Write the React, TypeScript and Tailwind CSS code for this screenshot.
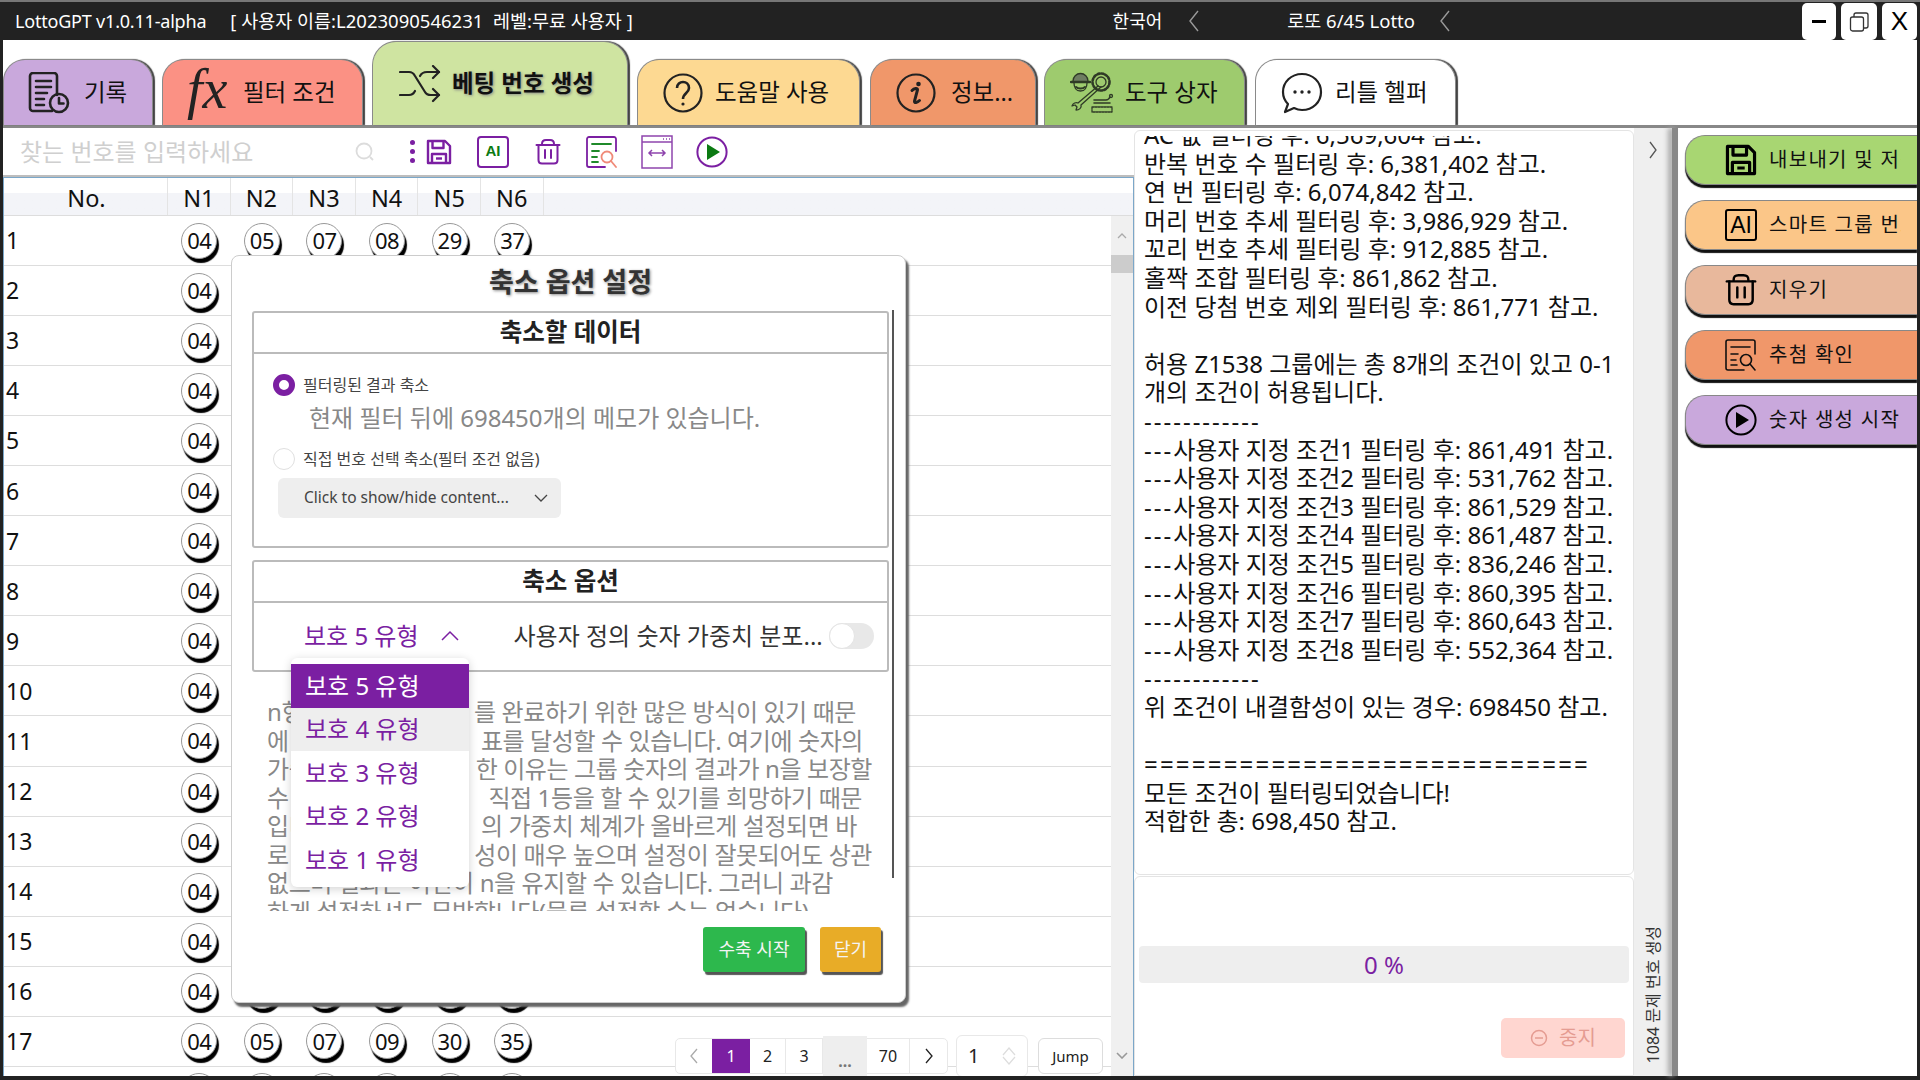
import React from "react";

const FONT = "font-['Noto_Sans','Noto_Sans_CJK_KR',sans-serif]";

const Chevron = ({ cls = "", d = "M10 2 L2 12 L10 22", w = 12, h = 24, color = "#9a9a9a", sw = 1.4 }: any) => (
  <svg width={w} height={h} viewBox={`0 0 ${w} ${h}`} className={cls} fill="none" stroke={color} strokeWidth={sw}>
    <path d={d} />
  </svg>
);

const HistoryIcon = () => (
  <svg width="42" height="42" viewBox="0 0 42 42" fill="none" stroke="#222" strokeWidth="2.6" strokeLinecap="round" strokeLinejoin="round">
    <path d="M24 39H5a3 3 0 0 1-3-3V4a3 3 0 0 1 3-3h21a3 3 0 0 1 3 3v19" />
    <path d="M8 9h15M8 15h15M8 21h11M8 27h8M8 33h8" />
    <circle cx="31" cy="31" r="9" />
    <path d="M31 26v5.5h4.5" />
  </svg>
);
const ShuffleIcon = () => (
  <svg width="42" height="38" viewBox="0 0 42 38" fill="none" stroke="#222" strokeWidth="2.2" strokeLinecap="round" strokeLinejoin="round">
    <path d="M1 7h9c3 0 5 2 6 4l10 16c1 2 3 3 6 3h8" />
    <path d="M1 30h9c3 0 5-2 6-4M21 11c1-2 4-4 7-4h12" />
    <path d="M34 1l6 6-6 6M34 24l6 6-6 6" />
  </svg>
);
const HelpIcon = () => (
  <svg width="40" height="40" viewBox="0 0 40 40" fill="none" stroke="#222" strokeWidth="2.2">
    <circle cx="20" cy="20" r="18.5" />
    <path d="M14 15c0-4 3-6 6-6s6 2 6 6c0 5-6 5-6 11" strokeWidth="2.6" />
    <circle cx="20" cy="31" r="1.6" fill="#222" stroke="none" />
  </svg>
);
const InfoIcon = () => (
  <svg width="40" height="40" viewBox="0 0 40 40" fill="none" stroke="#222" strokeWidth="2.2">
    <circle cx="20" cy="20" r="18.5" />
    <path d="M16 17.5c2-2 6-3 5.5-0.5L18.5 28c-.5 2.5 3 1.5 5-.5" strokeWidth="3" strokeLinecap="round" />
    <circle cx="22.5" cy="11" r="2.3" fill="#222" stroke="none" />
  </svg>
);
const ToolsIcon = () => (
  <svg width="44" height="42" viewBox="0 0 44 42" fill="none" stroke="#2f3a26" strokeWidth="1.3" strokeLinecap="round" strokeLinejoin="round">
    <path d="M3 9a7.500 7.500 0 0 1 15 0" fill="#6f7d62" />
    <path d="M1 10h19" strokeWidth="2.4" />
    <path d="M4 11c0 4 2 8 6.500 8s6.500-4 6.500-8" />
    <path d="M6 15c2 2 7 2 9 0" strokeWidth="2" />
    <circle cx="31" cy="10" r="8.500" strokeWidth="2.6" strokeDasharray="2.200 1.800" />
    <circle cx="31" cy="10" r="5" />
    <path d="M28 14L8 31c-2-1-5 0-6 3l3-1 2 2-1 3c3 0 6-2 5-5L31 15" />
    <path d="M24 28h12c2 0 3-1 4-3M24 31h16" strokeWidth="1.600" />
    <circle cx="41" cy="24" r="1.500" />
    <rect x="22" y="35" width="20" height="5" strokeDasharray="2 1" />
  </svg>
);
const ChatIcon = () => (
  <svg width="42" height="42" viewBox="0 0 42 42" fill="none" stroke="#222" strokeWidth="2.2" strokeLinejoin="round">
    <path d="M21 2c11 0 19 8 19 18s-8 18-19 18c-3 0-6-1-8-2l-9 4 3-8c-3-3-5-7-5-12C2 10 10 2 21 2z" />
    <circle cx="14" cy="20" r="1.7" fill="#222" stroke="none" />
    <circle cx="21" cy="20" r="1.7" fill="#222" stroke="none" />
    <circle cx="28" cy="20" r="1.7" fill="#222" stroke="none" />
  </svg>
);
const SaveIcon = ({ c = "#7b1fa2", s = 26, sw = 2.4 }: any) => (
  <svg width={s} height={s} viewBox="0 0 26 26" fill="none" stroke={c} strokeWidth={sw} strokeLinejoin="round">
    <path d="M2 2h17l5 5v17H2z" />
    <path d="M6.5 2v7h11V2" />
    <path d="M6 24v-9h14v9" />
    <path d="M10 19.5h6" />
  </svg>
);
const TrashIcon = ({ c = "#7b1fa2", s = 26, sw = 2 }: any) => (
  <svg width={s} height={s} viewBox="0 0 26 26" fill="none" stroke={c} strokeWidth={sw} strokeLinecap="round" strokeLinejoin="round">
    <path d="M1.5 6h23" />
    <path d="M7 5c0-3 1-4 4-4h4c3 0 4 1 4 4" />
    <path d="M3.5 6v15c0 2 1 3.5 3.5 3.5h12c2.500 0 3.500-1.500 3.500-3.500V6" />
    <path d="M10 11v8M16 11v8" />
  </svg>
);
const DocSearch = ({ border = "#7b1fa2", line = "#1f8a2a", glass = "#f08a78", s = 32, sw = 1.8 }: any) => (
  <svg width={s} height={s} viewBox="0 0 32 32" fill="none" strokeWidth={sw} strokeLinecap="round" strokeLinejoin="round">
    <path d="M30 15V3a2 2 0 0 0-2-2H3a2 2 0 0 0-2 2v26a2 2 0 0 0 2 2h16" stroke={border} />
    <path d="M6 8h19M6 15h7M6 21h5M6 26h6" stroke={line} />
    <circle cx="21" cy="21" r="5.500" stroke={glass} />
    <path d="M25 25l5 6" stroke={glass} />
  </svg>
);
const WidthIcon = () => (
  <svg width="32" height="34" viewBox="0 0 32 34" fill="none" stroke="#8e44ad" strokeWidth="1.5">
    <rect x="1" y="1" width="30" height="32" />
    <path d="M1 7h30" />
    <path d="M8 18h16M11 15l-3 3 3 3M21 15l3 3-3 3" />
    <path d="M22 4h1M25 4h1M28 4h1" />
  </svg>
);
const PlayIcon = ({ c = "#7b1fa2", f = "#0b7a12", s = 32, sw = 2 }: any) => (
  <svg width={s} height={s} viewBox="0 0 32 32">
    <circle cx="16" cy="16" r="14.600" fill="none" stroke={c} strokeWidth={sw} />
    <path d="M11 8l13 8-13 8z" fill={f} />
  </svg>
);
const SearchGlass = () => (
  <svg width="22" height="22" viewBox="0 0 22 22" fill="none" stroke="#dcdcdc" strokeWidth="1.8">
    <circle cx="10" cy="10" r="7.500" />
    <path d="M16 16l3 3" />
  </svg>
);

const Tab = ({ w, bg, pl, gap, ml, icon, label }: any) => (
  <div className={`${w} ${bg} ${pl} ${gap} ${ml} h-[66px] flex items-center rounded-t-[22px] border border-b-0 border-[#8a8a8a] shadow-[2px_0_1px_#444] shrink-0`}>
    {icon}
    <span className="text-[23.5px] text-[#111] whitespace-nowrap">{label}</span>
  </div>
);

const Ball = ({ n }: { n: string }) => (
  <div className="w-[36px] h-[36px] rounded-full bg-white border border-[#999] shadow-[2px_4px_1px_#000] flex items-center justify-center text-[22px] tracking-[-0.5px] text-[#111] mx-auto">
    {n}
  </div>
);

const ROWS: string[][] = [
  ["04", "05", "07", "08", "29", "37"],
  ["04", "05", "07", "08", "29", "38"],
  ["04", "05", "07", "08", "30", "31"],
  ["04", "05", "07", "08", "30", "32"],
  ["04", "05", "07", "08", "30", "34"],
  ["04", "05", "07", "08", "30", "35"],
  ["04", "05", "07", "08", "30", "37"],
  ["04", "05", "07", "09", "26", "31"],
  ["04", "05", "07", "09", "26", "34"],
  ["04", "05", "07", "09", "26", "35"],
  ["04", "05", "07", "09", "27", "31"],
  ["04", "05", "07", "09", "27", "34"],
  ["04", "05", "07", "09", "27", "35"],
  ["04", "05", "07", "09", "29", "31"],
  ["04", "05", "07", "09", "29", "34"],
  ["04", "05", "07", "09", "29", "35"],
  ["04", "05", "07", "09", "30", "35"],
  ["04", "05", "07", "09", "30", "37"],
];

const LOG: string[] = [
  "AC 값 필터링 후: 6,569,604 참고.",
  "반복 번호 수 필터링 후: 6,381,402 참고.",
  "연 번 필터링 후: 6,074,842 참고.",
  "머리 번호 추세 필터링 후: 3,986,929 참고.",
  "꼬리 번호 추세 필터링 후: 912,885 참고.",
  "홀짝 조합 필터링 후: 861,862 참고.",
  "이전 당첨 번호 제외 필터링 후: 861,771 참고.",
  " ",
  "허용 Z1538 그룹에는 총 8개의 조건이 있고 0-1",
  "개의 조건이 허용됩니다.",
  "------------",
  "---사용자 지정 조건1 필터링 후: 861,491 참고.",
  "---사용자 지정 조건2 필터링 후: 531,762 참고.",
  "---사용자 지정 조건3 필터링 후: 861,529 참고.",
  "---사용자 지정 조건4 필터링 후: 861,487 참고.",
  "---사용자 지정 조건5 필터링 후: 836,246 참고.",
  "---사용자 지정 조건6 필터링 후: 860,395 참고.",
  "---사용자 지정 조건7 필터링 후: 860,643 참고.",
  "---사용자 지정 조건8 필터링 후: 552,364 참고.",
  "------------",
  "위 조건이 내결함성이 있는 경우: 698450 참고.",
  " ",
  "============================",
  "모든 조건이 필터링되었습니다!",
  "적합한 총: 698,450 참고.",
];

const PARA = [
  { w: "w-[589px]", a: "n형 보호", b: "를 완료하기 위한 많은 방식이 있기 때문" },
  { w: "w-[596px]", a: "에 다양한", b: "표를 달성할 수 있습니다. 여기에 숫자의" },
  { w: "w-[605px]", a: "가중치", b: "한 이유는 그룹 숫자의 결과가 n을 보장할" },
  { w: "w-[595px]", a: "수 있도", b: "직접 1등을 할 수 있기를 희망하기 때문" },
  { w: "w-[590px]", a: "입니다", b: "의 가중치 체계가 올바르게 설정되면 바" },
  { w: "w-[605px]", a: "로 당첨", b: "성이 매우 높으며 설정이 잘못되어도 상관" },
  { w: "w-[588px]", a: "", b: "없으며 결과는 여전히 n을 유지할 수 있습니다. 그러니 과감" },
  { w: "w-[572px]", a: "", b: "하게 설정하셔도 무방합니다(물론 설정할 수는 없습니다)" },
];

const SIDE = [
  { bg: "bg-[#a8d672]", icon: <SaveIcon c="#000" s={32} sw={2.6} />, label: "내보내기 및 저장" },
  {
    bg: "bg-[#fbc688]",
    icon: (
      <span className="w-[32px] h-[32px] border-2 border-black rounded-[3px] flex items-center justify-center font-['Liberation_Sans',sans-serif] text-[23px] leading-none text-black">AI</span>
    ),
    label: "스마트 그룹 번호",
  },
  { bg: "bg-[#e8b89c]", icon: <TrashIcon c="#000" s={32} sw={2} />, label: "지우기" },
  { bg: "bg-[#f0976a]", icon: <DocSearch border="#111" line="#111" glass="#111" s={32} sw={1.6} />, label: "추첨 확인" },
  { bg: "bg-[#c9a8dc]", icon: <PlayIcon c="#000" f="#000" s={32} />, label: "숫자 생성 시작" },
];

const PageCell = ({ cls = "", children }: any) => (
  <div className={`h-full flex items-center justify-center text-[16px] text-[#222] border-r border-[#e8e8e8] ${cls}`}>{children}</div>
);

const LogLine = ({ text }: { text: string }) => {
  const m = text.match(/^([-=]+)(.*)$/);
  if (!m) return <div className="h-[28.6px]">{text}</div>;
  return (
    <div className="h-[28.6px]">
      <span className={text[0] === "=" ? "tracking-[2.2px]" : "tracking-[2px]"}>{m[1]}</span>
      {m[2]}
    </div>
  );
};

export default function App() {
  return (
    <div className={`relative w-[1920px] h-[1080px] overflow-hidden bg-[#222] ${FONT} pl-[3px] pr-[3px] pb-[4px] border-t-2 border-[#777]`}>
      {/* title bar */}
      <div className="h-[38px] -ml-[3px] -mr-[3px] flex items-center text-white text-[18px] relative">
        <span className="ml-[15px] tracking-[-0.2px]">LottoGPT v1.0.11-alpha</span>
        <span className="ml-[24px] text-[18.5px] whitespace-pre">[ 사용자 이름:L2023090546231  레벨:무료 사용자 ]</span>
        <span className="ml-auto">한국어</span>
        <Chevron cls="ml-[26px]" />
        <span className="ml-[87px] text-[18.5px]">로또 6/45 Lotto</span>
        <Chevron cls="ml-[24px] mr-[469px]" />
        <div className="absolute right-[3px] top-[1px] flex gap-[5px]">
          <div className="w-[34px] h-[37px] bg-white rounded-[5px] flex items-center justify-center text-black">
            <div className="w-[14px] h-[3px] bg-black" />
          </div>
          <div className="w-[36px] h-[37px] bg-white rounded-[5px] flex items-center justify-center">
            <svg width="20" height="20" viewBox="0 0 20 20" fill="none" stroke="#333" strokeWidth="1.300">
              <rect x="1.500" y="5" width="13" height="14" rx="2" />
              <path d="M5 5V3a2 2 0 0 1 2-2h10a2 2 0 0 1 2 2v11a2 2 0 0 1-2 2h-2" />
            </svg>
          </div>
          <div className="w-[35px] h-[37px] bg-white rounded-[5px] flex items-center justify-center text-black text-[26px] font-['Liberation_Sans',sans-serif]">X</div>
        </div>
      </div>

      {/* tabs */}
      <div className="h-[85px] bg-white flex items-end">
        <Tab w="w-[150px]" bg="bg-[#c9a8dc]" pl="pl-[24px]" gap="gap-[14px]" ml="" icon={<HistoryIcon />} label="기록" />
        <Tab
          w="w-[201px]"
          bg="bg-[#fb9184]"
          pl="pl-[24px]"
          gap="gap-[10px]"
          ml="ml-[9px]"
          icon={<span className="font-['Liberation_Serif',serif] italic text-[56px] leading-none text-[#222] w-[46px] -mt-[8px]">fx</span>}
          label="필터 조건"
        />
        <div className="ml-[9px] w-[256px] h-[84px] bg-[#cfe4a1] rounded-t-[24px] border border-b-0 border-[#8a8a8a] shadow-[2px_0_1px_#444] flex items-center pl-[26px] gap-[11px] shrink-0">
          <ShuffleIcon />
          <span className="text-[23.5px] font-bold text-[#111] whitespace-nowrap [text-shadow:1px_1px_3px_#888]">베팅 번호 생성</span>
        </div>
        <Tab w="w-[223px]" bg="bg-[#fdd992]" pl="pl-[25px]" gap="gap-[12px]" ml="ml-[9px]" icon={<HelpIcon />} label="도움말 사용" />
        <Tab w="w-[166px]" bg="bg-[#f0976a]" pl="pl-[25px]" gap="gap-[15px]" ml="ml-[10px]" icon={<InfoIcon />} label="정보..." />
        <Tab w="w-[201px]" bg="bg-[#9ecb6e]" pl="pl-[25px]" gap="gap-[11px]" ml="ml-[8px]" icon={<ToolsIcon />} label="도구 상자" />
        <Tab w="w-[201px]" bg="bg-white" pl="pl-[25px]" gap="gap-[12px]" ml="ml-[10px]" icon={<ChatIcon />} label="리틀 헬퍼" />
      </div>

      {/* main */}
      <div className="h-[951px] bg-white border-t-[3px] border-[#888] flex">
        {/* left column */}
        <div className="w-[1131px] shrink-0 flex flex-col">
          <div className="h-[49px] border-b-2 border-[#bdbdbd] flex items-center">
            <span className="ml-[17px] w-[334px] text-[24px] text-[#cfcfcf] whitespace-nowrap">찾는 번호를 입력하세요</span>
            <SearchGlass />
            <div className="ml-[34px] flex flex-col gap-[4px]">
              <i className="w-[5px] h-[5px] rounded-full bg-[#7b1fa2]" />
              <i className="w-[5px] h-[5px] rounded-full bg-[#7b1fa2]" />
              <i className="w-[5px] h-[5px] rounded-full bg-[#7b1fa2]" />
            </div>
            <div className="ml-[11px]"><SaveIcon /></div>
            <span className="ml-[25px] w-[32px] h-[32px] border-2 border-[#7b1fa2] rounded-[4px] flex items-center justify-center text-[#0b7a12] text-[15px] font-['Liberation_Sans',sans-serif] font-bold">AI</span>
            <div className="ml-[26px]"><TrashIcon /></div>
            <div className="ml-[25px]"><DocSearch /></div>
            <div className="ml-[23px]"><WidthIcon /></div>
            <div className="ml-[23px]"><PlayIcon /></div>
          </div>
          <div className="relative flex-1 min-h-0 border-x border-t border-[#7ba7c9] flex flex-col overflow-hidden">
            <div className="h-[38px] shrink-0 flex text-[23.5px] text-[#111] border-b border-[#ddd] bg-gradient-to-b from-white from-40% to-[#f3f4f8] to-40%">
              <div className="w-[164px] border-r border-[#e4e4e4] flex items-center justify-center pt-[4px] pl-[2px]">No.</div>
              {["N1", "N2", "N3", "N4", "N5", "N6"].map((h) => (
                <div key={h} className="w-[62.6px] border-r border-[#e4e4e4] flex items-center justify-center pt-[4px]">{h}</div>
              ))}
              <div className="flex-1" />
            </div>
            <div className="flex-1 min-h-0 flex">
              <div className="flex-1 min-w-0 overflow-hidden">
                {ROWS.map((r, i) => (
                  <div key={i} className="h-[50.05px] border-b border-[#ddd] flex items-center text-[23px] text-[#111]">
                    <div className="w-[164px] pl-[2px]">{i + 1}</div>
                    {r.map((n, j) => (
                      <div key={j} className="w-[62.6px]"><Ball n={n} /></div>
                    ))}
                  </div>
                ))}
              </div>
              <div className="w-[22px] shrink-0 bg-[#f0f0f0] flex flex-col items-center pt-[17px]">
                <Chevron w={10} h={6} d="M1 5 L5 1 L9 5" color="#aaa" sw={1.3} />
                <div className="mt-[16px] w-full h-[18px] bg-[#ccc]" />
                <Chevron cls="mt-auto mb-[17px]" w={12} h={7} d="M1 1 L6 6 L11 1" color="#999" sw={1.6} />
              </div>
            </div>
            {/* pagination */}
            <div className="absolute left-[671px] top-[857px] h-[42px] flex items-center">
              <div className="h-[36px] flex bg-white border border-[#e8e8e8] rounded-[5px]">
                <PageCell cls="w-[36px] border-r-0">
                  <Chevron w={10} h={16} d="M8 1 L2 8 L8 15" color="#aaa" sw={1.300} />
                </PageCell>
                <PageCell cls="w-[38px] bg-[#7b1fa2] !text-white border-r-0">1</PageCell>
                <PageCell cls="w-[36px]">2</PageCell>
                <PageCell cls="w-[37px]">3</PageCell>
                <div className="w-[44px] h-[42px] -mt-[3px] bg-[#eee] flex items-center justify-center text-[#777] text-[16px] font-bold pt-[8px]">...</div>
                <PageCell cls="w-[43px]">70</PageCell>
                <PageCell cls="w-[37px] border-r-0">
                  <Chevron w={10} h={16} d="M2 1 L8 8 L2 15" color="#222" sw={1.300} />
                </PageCell>
              </div>
              <div className="ml-[8px] w-[72px] h-[42px] bg-white border border-[#e8e8e8] rounded-[6px] flex items-center pl-[11px] text-[20px] text-[#222]">
                1
                <svg className="ml-auto mr-[11px]" width="14" height="18" viewBox="0 0 14 18" fill="none" stroke="#ddd" strokeWidth="1.200">
                  <path d="M1 8 L7 1 L13 8M1 10 L7 17 L13 10" />
                </svg>
              </div>
              <div className="ml-[10px] w-[65px] h-[36px] bg-white border border-[#ddd] rounded-[6px] flex items-center justify-center text-[15px] text-[#222]">Jump</div>
            </div>
          </div>
        </div>

        {/* middle column */}
        <div className="w-[500px] shrink-0 flex flex-col pt-[2px]">
          <div className="h-[745px] bg-white border border-[#e4e4e4] rounded-[6px] pt-[5px] pl-[9px] text-[24px] leading-[28.600px] text-[#111]">
            <div className="h-full overflow-hidden">
              <div className="-mt-[15px] whitespace-pre">
                {LOG.map((l, i) => (
                  <LogLine key={i} text={l} />
                ))}
              </div>
            </div>
          </div>
          <div className="flex-1 mt-[1px] border border-[#e4e4e4] rounded-t-[6px] flex flex-col">
            <div className="mt-[69px] mx-[4px] h-[37px] bg-[#eee] rounded-[4px] flex items-center justify-center text-[24px] text-[#7b1fa2]">0 %</div>
            <div className="mt-[35px] ml-[366px] w-[124px] h-[40px] bg-[#ffd6d0] rounded-[5px] flex items-center justify-center gap-[11px] text-[20px] text-[#e59c92]">
              <svg width="18" height="18" viewBox="0 0 18 18" fill="none" stroke="#e59c92" strokeWidth="1.500">
                <circle cx="9" cy="9" r="7.500" />
                <path d="M5 9h8" />
              </svg>
              중지
            </div>
          </div>
        </div>

        {/* strip */}
        <div className="w-[38px] shrink-0 bg-[#efefef] flex flex-col items-center">
          <Chevron cls="mt-[13px]" w={10} h={18} d="M2 1 L8 9 L2 17" color="#555" sw={1.300} />
          <span className="mt-auto mb-[13px] [writing-mode:vertical-rl] [text-orientation:sideways] rotate-180 text-[16px] text-[#333] whitespace-nowrap">1084 문제 번호 생성</span>
        </div>
        <div className="w-[6px] shrink-0 bg-[#888] shadow-[-4px_0_5px_#aaa]" />

        {/* right column */}
        <div className="flex-1 min-w-0 overflow-hidden pl-[7px] pt-[7px] flex flex-col gap-[15px]">
          {SIDE.map((s) => (
            <div key={s.label} className={`h-[50px] shrink-0 w-full ${s.bg} rounded-l-[20px] border border-r-0 border-[#888] shadow-[0_3px_1px_#111] flex items-center pl-[39px] overflow-hidden`}>
              <div className="w-[32px] h-[32px] shrink-0 flex items-center justify-center">{s.icon}</div>
              <span className="ml-[12px] w-[132px] overflow-hidden text-[20px] tracking-[1.300px] text-[#111] whitespace-nowrap">{s.label}</span>
            </div>
          ))}
        </div>
      </div>

      {/* modal */}
      <div className="absolute left-[231px] top-[253px] w-[675px] h-[748px] bg-white rounded-[8px] border border-[#ccc] shadow-[3px_4px_2px_#666] pl-[20px] pr-[16px]">
        <div className="h-[55px] flex items-center justify-center text-[27px] font-bold text-[#333] [text-shadow:1px_1px_3px_#888] pb-[2px]">축소 옵션 설정</div>
        <div className="h-[237px] border-2 border-[#bbb] rounded-[3px]">
          <div className="h-[41px] border-b-2 border-[#bbb] flex items-center justify-center text-[24.5px] font-semibold text-[#222]">축소할 데이터</div>
          <div className="mt-[19px] pl-[19px] flex items-center h-[24px]">
            <span className="w-[22px] h-[22px] rounded-full border-[6px] border-[#7b1fa2] bg-white" />
            <span className="ml-[8px] text-[16px] text-[#444]">필터링된 결과 축소</span>
          </div>
          <div className="mt-[6px] h-[30px] pl-[55px] flex items-center text-[24px] text-[#888] whitespace-nowrap">현재 필터 뒤에 698450개의 메모가 있습니다.</div>
          <div className="mt-[14px] pl-[19px] flex items-center h-[24px]">
            <span className="w-[22px] h-[22px] rounded-full border border-[#e0e0e0] bg-white" />
            <span className="ml-[8px] text-[16px] text-[#444]">직접 번호 선택 축소(필터 조건 없음)</span>
          </div>
          <div className="mt-[7px] ml-[24px] w-[283px] h-[40px] bg-[#eee] rounded-[6px] flex items-center pl-[26px] text-[15.500px] text-[#444] whitespace-nowrap">
            Click to show/hide content...
            <Chevron cls="ml-auto mr-[13px]" w={14} h={8} d="M1 1 L7 7 L13 1" color="#444" sw={1.300} />
          </div>
        </div>
        <div className="mt-[12px] h-[112px] border-2 border-[#bbb] rounded-[3px]">
          <div className="h-[41px] border-b-2 border-[#bbb] flex items-center justify-center text-[24.5px] font-semibold text-[#222]">축소 옵션</div>
          <div className="h-[65px] flex items-center pl-[50px]">
            <span className="text-[24px] text-[#7b1fa2] whitespace-nowrap">보호 5 유형</span>
            <Chevron cls="ml-[22px]" w={18} h={11} d="M1 10 L9 2 L17 10" color="#7b1fa2" sw={1.500} />
            <span className="ml-[55px] text-[24px] text-[#333] whitespace-nowrap">사용자 정의 숫자 가중치 분포...</span>
            <span className="ml-auto mr-[13px] w-[45px] h-[26px] rounded-full bg-[#e8e8e8] flex items-center shrink-0">
              <i className="w-[26px] h-[26px] rounded-full bg-white border border-[#e4e4e4]" />
            </span>
          </div>
        </div>
        <div className="mt-[26px] ml-[15px] h-[213px] overflow-hidden text-[24px] leading-[28.500px] tracking-[-0.4px] text-[#888] whitespace-nowrap">
          {PARA.map((p) => (
            <div key={p.b} className={`h-[28.5px] flex justify-between ${p.w}`}>
              {p.a ? <span className="min-w-0 overflow-hidden">{p.a}</span> : null}
              <span className="shrink-0">{p.b}</span>
            </div>
          ))}
        </div>
        <div className="mt-[16px] pr-[8px] flex justify-end gap-[15px] text-[18px] text-[#f4f4f4]">
          <div className="w-[102px] h-[45px] bg-[#2db84d] rounded-[3px] shadow-[2px_3px_1px_#555] flex items-center justify-center">수축 시작</div>
          <div className="w-[61px] h-[45px] bg-[#e8ac27] rounded-[3px] shadow-[2px_3px_1px_#555] flex items-center justify-center">닫기</div>
        </div>
        {/* modal scrollbar */}
        <div className="absolute left-[660px] top-[54px] w-[2px] h-[568px] bg-[#555]" />
        {/* select menu */}
        <div className="absolute left-[59px] top-[402px] w-[178px] h-[229px] bg-white rounded-[6px] shadow-[0_2px_10px_rgba(0,0,0,0.18)] pt-[6px] text-[24px] text-[#7b1fa2]">
          {["보호 5 유형", "보호 4 유형", "보호 3 유형", "보호 2 유형", "보호 1 유형"].map((o, i) => (
            <div key={o} className={`h-[43.500px] flex items-center pl-[14px] ${i === 0 ? "bg-[#7b1fa2] text-white" : i === 1 ? "bg-[#eee]" : ""}`}>{o}</div>
          ))}
        </div>
      </div>
    </div>
  );
}
